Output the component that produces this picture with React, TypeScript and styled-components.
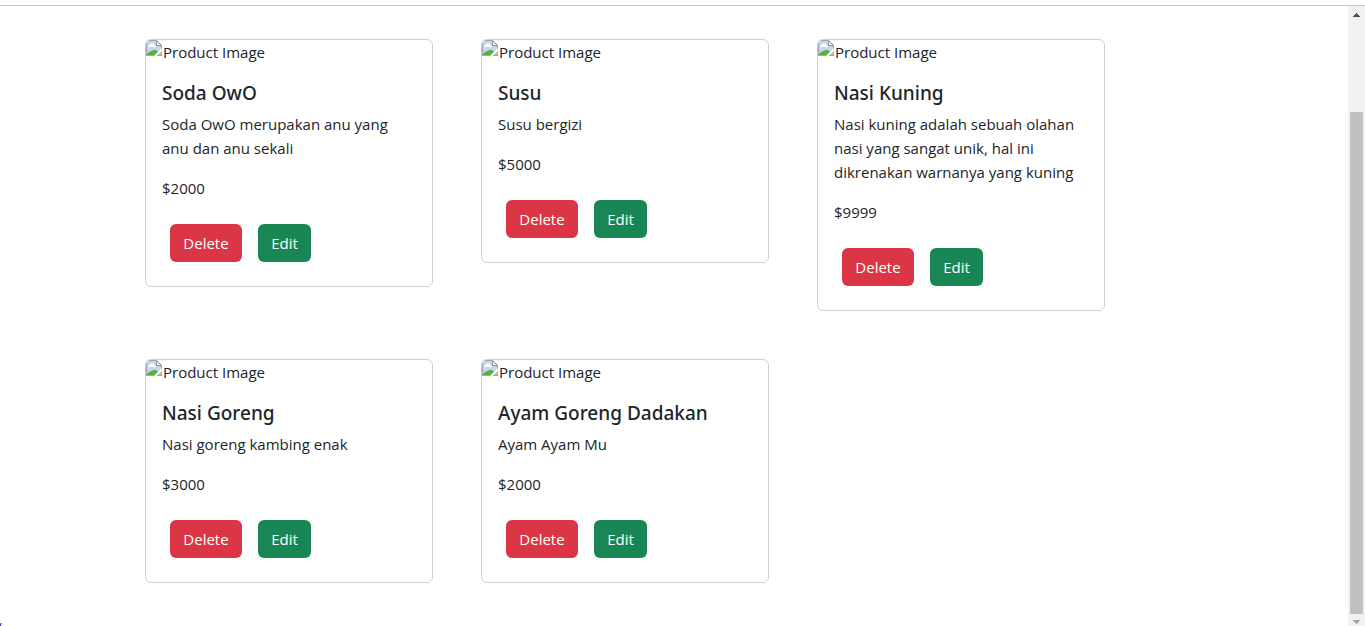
import React from "react";
import styled, { createGlobalStyle } from "styled-components";

const GlobalStyle = createGlobalStyle`
  *, *::before, *::after { box-sizing: border-box; }
  body {
    margin: 0;
    background: #fff;
    color: #212529;
    font-family: "Segoe UI", "Open Sans", "Noto Sans", sans-serif;
    font-size: 15px;
    line-height: 24px;
  }
`;

const Window = styled.div`
  display: flex;
  flex-direction: column;
  height: 100vh;
  overflow: hidden;
`;

const TopEdge = styled.div`
  flex: none;
  height: 6px;
  border-bottom: 1px solid #c8c8c8;
`;

const Viewport = styled.div`
  display: flex;
  flex: 1;
  min-height: 0;
`;

const Page = styled.div`
  display: flex;
  flex-direction: column;
  flex: 1;
  min-width: 0;
  overflow: hidden;
`;

const ProductGrid = styled.main`
  display: flex;
  flex-wrap: wrap;
  align-items: flex-start;
  gap: 48px;
  width: 100%;
  max-width: 1140px;
  margin: 0 auto;
  padding: 33px 41px 32px;
`;

const Card = styled.article`
  width: 288px;
  border: 1px solid #d0d0d0;
  border-radius: 6px;
  overflow: hidden;
`;

const ImageFallback = styled.div`
  display: flex;
  align-items: flex-start;
  gap: 1px;
  height: 24px;
`;

const CardBody = styled.div`
  padding: 16px;
`;

const Title = styled.h5`
  margin: 0 0 6px;
  font-family: "Segoe UI", "Noto Sans", "Open Sans", sans-serif;
  font-size: 19px;
  font-weight: 500;
  line-height: 26px;
`;

const Text = styled.p`
  margin: 0 0 16px;
`;

const Actions = styled.div`
  display: flex;
  gap: 16px;
  padding: 8px;
`;

const Button = styled.button<{ $tone: "danger" | "success" }>`
  width: ${({ $tone }) => ($tone === "danger" ? "72px" : "53px")};
  height: 38px;
  padding: 0;
  border: 0;
  border-radius: 6px;
  background: ${({ $tone }) => ($tone === "danger" ? "#dc3545" : "#198754")};
  color: #fff;
  font: inherit;
  cursor: pointer;
`;

const FooterLink = styled.a`
  align-self: flex-start;
  width: 2px;
  overflow: hidden;
  direction: rtl;
  color: #3b1f9e;
  text-decoration: none;
`;

const ScrollBar = styled.div`
  display: flex;
  flex-direction: column;
  flex: none;
  width: 17px;
  background: #f1f1f1;
`;

const ScrollArrow = styled.div<{ $down?: boolean }>`
  display: flex;
  justify-content: center;
  flex: none;
  height: ${({ $down }) => ($down ? "12px" : "17px")};
  padding-top: ${({ $down }) => ($down ? "6px" : "7px")};
  color: ${({ $down }) => ($down ? "#a3a3a3" : "#505050")};
`;

const Thumb = styled.div`
  flex: 1;
  margin: 89px 2px 0;
  background: #c1c1c1;
`;

const BrokenImageIcon = () => (
  <svg width="16" height="16" viewBox="0 0 16 16" aria-hidden="true">
    <path d="M0 0H11L16 5V16H0Z" fill="#c3d5f6" />
    <path d="M2 7C2 5.8 2.8 5 3.8 5C4.2 3.8 5 3 6 3C7.2 3 8 3.8 8.2 5C9.2 5 10 5.8 10 7Z" fill="#fff" />
    <path d="M1 15V14C3 12 6 10 8.5 10C10 10 11 10.5 12 12L9 15Z" fill="#58b036" />
    <path d="M8.5 15.5H0.5V0.5H10.5L15.5 5.5V9" fill="none" stroke="#a3a3a3" />
    <path d="M10.5 0.5V5.5H15.5Z" fill="#f4f4f4" stroke="#949494" />
    <path d="M16 8L8 16H11L16 11Z" fill="#fff" />
    <path d="M11 16L16 11V16Z" fill="#a9c9a0" />
    <path d="M11 15.5H15.5V12" fill="none" stroke="#a3a3a3" />
  </svg>
);

const UpArrow = () => (
  <svg width="7" height="4" viewBox="0 0 7 4" shapeRendering="crispEdges" fill="currentColor" aria-hidden="true">
    <path d="M3 0H4V1H5V2H6V3H7V4H0V3H1V2H2V1H3Z" />
  </svg>
);

const DownArrow = () => (
  <svg width="7" height="4" viewBox="0 0 7 4" shapeRendering="crispEdges" fill="currentColor" aria-hidden="true">
    <path d="M0 0H7V1H6V2H5V3H4V4H3V3H2V2H1V1H0Z" />
  </svg>
);

const products = [
  { name: "Soda OwO", description: "Soda OwO merupakan anu yang anu dan anu sekali", price: 2000 },
  { name: "Susu", description: "Susu bergizi", price: 5000 },
  {
    name: "Nasi Kuning",
    description: "Nasi kuning adalah sebuah olahan nasi yang sangat unik, hal ini dikrenakan warnanya yang kuning",
    price: 9999,
  },
  { name: "Nasi Goreng", description: "Nasi goreng kambing enak", price: 3000 },
  { name: "Ayam Goreng Dadakan", description: "Ayam Ayam Mu", price: 2000 },
];

export default function App() {
  return (
    <>
      <GlobalStyle />
      <Window>
        <TopEdge />
        <Viewport>
          <Page>
            <ProductGrid>
              {products.map((product) => (
                <Card key={product.name}>
                  <ImageFallback>
                    <BrokenImageIcon />
                    <span>Product Image</span>
                  </ImageFallback>
                  <CardBody>
                    <Title>{product.name}</Title>
                    <Text>{product.description}</Text>
                    <Text>${product.price}</Text>
                    <Actions>
                      <Button type="button" $tone="danger">Delete</Button>
                      <Button type="button" $tone="success">Edit</Button>
                    </Actions>
                  </CardBody>
                </Card>
              ))}
            </ProductGrid>
            <FooterLink href="#">/</FooterLink>
          </Page>
          <ScrollBar aria-hidden="true">
            <ScrollArrow><UpArrow /></ScrollArrow>
            <Thumb />
            <ScrollArrow $down><DownArrow /></ScrollArrow>
          </ScrollBar>
        </Viewport>
      </Window>
    </>
  );
}
